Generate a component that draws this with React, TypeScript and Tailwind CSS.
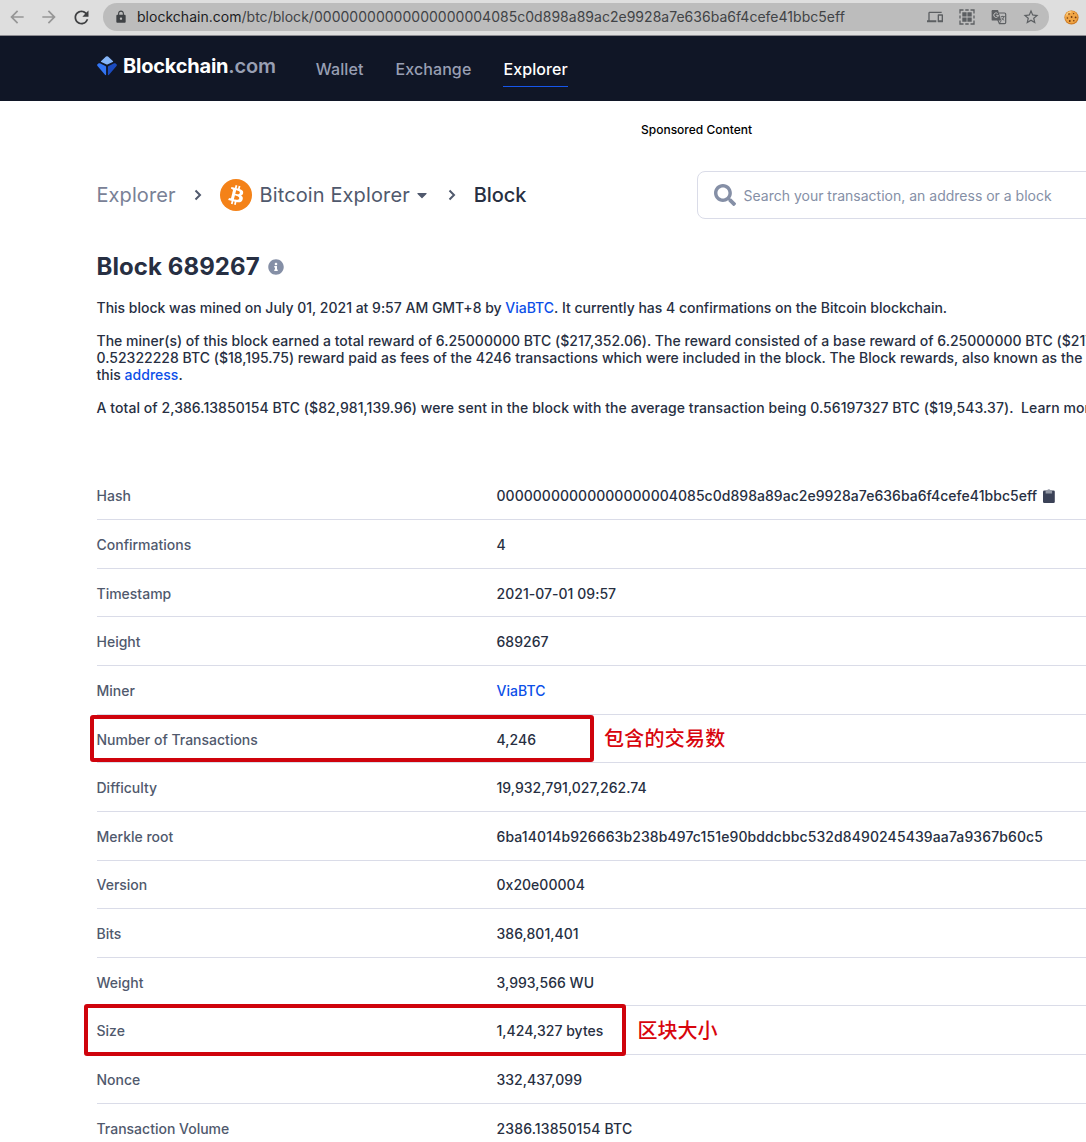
import type { ReactNode } from 'react';
import { MdArrowBack, MdArrowForward, MdRefresh, MdLock, MdStarOutline, MdOutlineDevices } from 'react-icons/md';
import { FaSearch, FaInfoCircle, FaCaretDown } from 'react-icons/fa';

const HASH = '00000000000000000004085c0d898a89ac2e9928a7e636ba6f4cefe41bbc5eff';

function GridIcon() {
  return (
    <svg width="16" height="16" viewBox="0 0 16 16" className="shrink-0" fill="none" stroke="#5c5f62">
      <path d="M1 4.5V1h3.5M6.3 1h3.4M11.5 1H15v3.5M15 11.5V15h-3.5M9.7 15H6.3M4.5 15H1v-3.5M1 9.5v-3M15 6.5v3" strokeWidth="1.3" />
      <path d="M3.3 3.3h4.3v4.3H3.300zM8.4 3.3h4.3v4.3H8.400zM3.3 8.4h4.3v4.3H3.300zM8.4 8.4h4.3v4.3H8.400z" fill="#5c5f62" stroke="none" />
    </svg>
  );
}

function TranslateIcon() {
  return (
    <svg width="16" height="16" viewBox="0 0 16 16" className="shrink-0" fill="none">
      <path d="M8 4h5.500c.8 0 1.200.4 1.200 1.200v8.300c0 .8-.4 1.200-1.200 1.200H8.500L6.800 11" stroke="#5c5f62" strokeWidth="1.200" />
      <path d="M1.800 1h5.200l3.200 10.600H1.800C1 11.600.6 11.200.6 10.400V2.200C.6 1.400 1 1 1.800 1z" fill="#5c5f62" />
      <path d="M5.200 6.300h2.200a2.300 2.300 0 1 1-.7-1.800" stroke="#c6c6c6" strokeWidth="1" />
      <path d="M9.800 7.600h4M11.700 6.800v.8M13 7.600c-.4 1.500-1.300 2.700-2.400 3.600M10.600 8.800c.6 1 1.500 1.900 2.600 2.500M8.300 14.500l2-2.900" stroke="#5c5f62" strokeWidth=".9" />
    </svg>
  );
}

function CookieIcon() {
  return (
    <svg width="15" height="15" viewBox="0 0 15 15" className="shrink-0">
      <circle cx="7.5" cy="7.5" r="7.1" fill="#cd7b24" />
      <circle cx="7.3" cy="7" r="6.3" fill="#f0a545" />
      <path d="M2.5 5.5a5 5 0 0 1 5-3.5" stroke="#fbcb7c" strokeWidth="1.5" fill="none" />
      <g fill="#70380f">
        <circle cx="5" cy="4" r=".8" />
        <circle cx="9.6" cy="3.6" r=".7" />
        <circle cx="7.6" cy="7" r=".9" />
        <circle cx="3.4" cy="8" r=".8" />
        <circle cx="11.6" cy="7.4" r=".9" />
        <circle cx="5.8" cy="11" r=".9" />
        <circle cx="9.8" cy="10.8" r=".8" />
      </g>
    </svg>
  );
}

function Logo() {
  return (
    <svg width="20" height="20" viewBox="0 0 20 20" className="shrink-0">
      <path d="M9 .6a1.500 1.500 0 0 1 2 0l4.800 4.500c.4.4.4.7 0 1l-4.900 2.100a2 2 0 0 1-1.800 0L4.200 6.100c-.4-.3-.4-.6 0-1z" fill="#85b5f8" />
      <path d="M2.900 7.300 8.400 10c.5.3.7.7.7 1.200v7.100c0 .9-.5 1.100-1.100.5L.5 9.900c-.6-.7-.6-1 0-1.600l.9-.8c.5-.4.9-.5 1.500-.2z" fill="#3275f4" />
      <path d="M17.100 7.300 11.600 10c-.5.3-.7.7-.7 1.200v7.100c0 .9.500 1.100 1.100.5l7.500-8.900c.6-.7.6-1 0-1.600l-.9-.8c-.5-.4-.9-.5-1.500-.2z" fill="#1b4bc0" />
    </svg>
  );
}

function Chevron() {
  return (
    <svg width="8" height="12" viewBox="0 0 8 12" className="shrink-0" fill="none" stroke="#50596d" strokeWidth="2">
      <path d="M1.500 1.500 6 6l-4.500 4.500" />
    </svg>
  );
}

function BitcoinIcon() {
  return (
    <svg width="32" height="32" viewBox="0 0 32 32" className="shrink-0">
      <circle cx="16" cy="16" r="16" fill="#f48218" />
      <path
        fill="#fff"
        d="M23.189 14.020c.314-2.096-1.283-3.223-3.465-3.975l.708-2.840-1.728-.430-.690 2.765c-.454-.114-.920-.220-1.385-.326l.695-2.783L15.596 6l-.708 2.839c-.376-.086-.746-.170-1.104-.260l.002-.009-2.384-.595-.460 1.846s1.283.294 1.256.312c.700.175.826.638.805 1.006l-.806 3.235c.048.012.110.030.180.057l-.183-.045-1.130 4.532c-.086.212-.303.531-.793.410.018.025-1.256-.313-1.256-.313l-.858 1.978 2.250.561c.418.105.828.215 1.231.318l-.715 2.872 1.727.430.708-2.840c.472.127.930.245 1.378.357l-.706 2.828 1.728.430.715-2.866c2.948.558 5.164.333 6.097-2.333.752-2.146-.037-3.385-1.588-4.192 1.130-.260 1.980-1.003 2.207-2.538zm-3.950 5.538c-.533 2.147-4.148.986-5.320.695l.950-3.805c1.172.293 4.929.872 4.370 3.110zm.535-5.569c-.487 1.953-3.495.960-4.470.717l.860-3.450c.975.243 4.118.696 3.610 2.733z"
      />
    </svg>
  );
}

function Clipboard() {
  return (
    <svg width="12" height="14" viewBox="0 0 12 14" className="shrink-0">
      <rect y="1.500" width="11.800" height="12.500" rx="1.300" fill="#3b4257" />
      <path d="M2.600 4.500V2.300c0-.5.300-.8.800-.8h.8a1.700 1.700 0 0 1 3.300 0h.8c.5 0 .8.3.8.8v2.200z" fill="#9297a4" />
    </svg>
  );
}

function Row({ label, children, annotation }: { label: string; children: ReactNode; annotation?: ReactNode }) {
  return (
    <div className="relative flex h-[48.63px] items-center border-b border-[#dadce8] pt-[2px] whitespace-nowrap">
      <div className="w-[400px] shrink-0 text-[#50596d]">{label}</div>
      <div className="flex items-center tracking-[0.03px] text-[#272f42]">{children}</div>
      {annotation}
    </div>
  );
}

export default function App() {
  return (
    <div className="h-[1142px] w-[1086px] overflow-hidden bg-white font-['Inter',sans-serif] text-sm font-medium">
      <div className="flex h-9 items-center border-b border-[#8c8b91] bg-[#dedede] pb-px">
        <MdArrowBack className="ml-[7px] size-5 shrink-0 text-[#969696]" />
        <MdArrowForward className="ml-3 size-5 shrink-0 text-[#969696]" />
        <MdRefresh className="ml-3 size-[21px] shrink-0 text-[#3f4042]" />
        <div className="ml-[11px] flex h-7 w-[946px] shrink-0 items-center rounded-full bg-[#bcbcbc]">
          <MdLock className="ml-[11px] size-[14px] shrink-0 text-[#3f4245]" />
          <div className="ml-[9px] w-[789px] shrink-0 whitespace-nowrap font-normal tracking-[0.02px] text-[#414346]">
            <span className="text-[#1c1d1f]">blockchain.com</span>/btc/block/{HASH}
          </div>
          <div className="flex items-center gap-4 pl-px text-[#5c5f62]">
            <MdOutlineDevices className="size-4 shrink-0" />
            <GridIcon />
            <TranslateIcon />
            <MdStarOutline className="-ml-px size-[18px] shrink-0" />
          </div>
        </div>
        <div className="ml-[15px] shrink-0">
          <CookieIcon />
        </div>
      </div>

      <header className="flex h-[65px] bg-[#101626] pl-[97px]">
        <div className="mt-[20px] flex h-5 items-center">
          <Logo />
          <div className="pl-[6px] text-[20px] leading-5 font-bold tracking-[-0.22px] text-white">
            Blockchain<span className="font-semibold text-[#989fb3]">.com</span>
          </div>
        </div>
        <nav className="ml-[40px] flex gap-8 pt-[17px] text-base leading-8 tracking-[0.1px] text-[#989fb3]">
          <a>Wallet</a>
          <a>Exchange</a>
          <a className="h-[34px] border-b border-[#1656eb] text-white">Explorer</a>
        </nav>
      </header>

      <div className="pt-[21px] pl-[641px] text-xs leading-4 text-black">Sponsored Content</div>

      <main className="pl-[96.5px]">
        <div className="mt-[33px] flex h-12 items-center">
          <div className="flex w-[600.5px] shrink-0 items-center text-[20px] leading-6 whitespace-nowrap">
            <span className="w-[97px] font-normal tracking-[0.08px] text-[#798196]">Explorer</span>
            <Chevron />
            <span className="ml-[18px]"><BitcoinIcon /></span>
            <span className="ml-2 font-normal tracking-[0.12px] text-[#50596d]">Bitcoin Explorer</span>
            <FaCaretDown className="ml-[4px] size-4 text-[#50596d]" />
            <span className="ml-[18px]"><Chevron /></span>
            <span className="ml-[18px] tracking-[-0.1px] text-[#272f42]">Block</span>
          </div>
          <div className="flex h-12 w-[420px] shrink-0 items-center rounded-lg border border-[#dadce8] pl-4">
            <FaSearch className="size-[22px] text-[#858fa6]" />
            <span className="ml-[7.5px] pt-0.5 font-normal whitespace-nowrap text-[#858fa6]">
              Search your transaction, an address or a block
            </span>
          </div>
        </div>

        <div className="mt-[32px] flex h-8 items-center">
          <h1 className="text-2xl font-bold tracking-[0.08px] text-[#272f42]">Block 689267</h1>
          <FaInfoCircle className="ml-[8.5px] size-4 text-[#858fa6]" />
        </div>

        <div className="mt-4 leading-[17px] whitespace-nowrap text-[#272f42]">
          <p className="tracking-[-0.008px]">
            This block was mined on July 01, 2021 at 9:57 AM GMT+8 by <a className="text-[#0c4fe8]">ViaBTC</a>. It
            currently has 4 confirmations on the Bitcoin blockchain.
          </p>
          <p className="mt-4 tracking-[0.018px]">
            The miner(s) of this block earned a total reward of 6.25000000 BTC ($217,352.06). The reward consisted of a
            base reward of 6.25000000 BTC ($217,352.06)
            <br />
            0.52322228 BTC ($18,195.75) reward paid as fees of the 4246 transactions which were included in the block.
            The Block rewards, also known as the
            <br />
            this <a className="text-[#0c4fe8]">address</a>.
          </p>
          <p className="mt-4 tracking-[0.065px]">
            A total of 2,386.13850154 BTC ($82,981,139.96) were sent in the block with the average transaction being
            0.56197327 BTC ($19,543.37).&nbsp; Learn more
          </p>
        </div>

        <section className="mt-[55.6px] leading-5">
          <Row label="Hash">
            <span>{HASH}</span>
            <span className="pl-[6px]"><Clipboard /></span>
          </Row>
          <Row label="Confirmations">4</Row>
          <Row label="Timestamp">2021-07-01 09:57</Row>
          <Row label="Height">689267</Row>
          <Row label="Miner"><a className="text-[#0c4fe8]">ViaBTC</a></Row>
          <Row
            label="Number of Transactions"
            annotation={
              <>
                <div className="absolute top-0 -left-[6.5px] h-[47px] w-[504px] rounded-[3px] border-4 border-[#cf030c]" />
                <div className="absolute top-[9.4px] left-[507.5px] font-['Noto_Sans_CJK_SC',sans-serif] text-[20px] leading-7 tracking-[0.25px] text-[#d8050d]">
                  包含的交易数
                </div>
              </>
            }
          >
            4,246
          </Row>
          <Row label="Difficulty">19,932,791,027,262.74</Row>
          <Row label="Merkle root">
            <span className="tracking-[0.105px]">6ba14014b926663b238b497c151e90bddcbbc532d8490245439aa7a9367b60c5</span>
          </Row>
          <Row label="Version">0x20e00004</Row>
          <Row label="Bits">386,801,401</Row>
          <Row label="Weight">3,993,566 WU</Row>
          <Row
            label="Size"
            annotation={
              <>
                <div className="absolute -top-[2px] -left-[12.5px] h-[52px] w-[542px] rounded-[3px] border-4 border-[#cf030c]" />
                <div className="absolute top-[9.4px] left-[541px] font-['Noto_Sans_CJK_SC',sans-serif] text-[20px] leading-7 text-[#d8050d]">
                  区块大小
                </div>
              </>
            }
          >
            1,424,327 bytes
          </Row>
          <Row label="Nonce">332,437,099</Row>
          <Row label="Transaction Volume"><span className="tracking-[0.14px]">2386.13850154 BTC</span></Row>
        </section>
      </main>
    </div>
  );
}
